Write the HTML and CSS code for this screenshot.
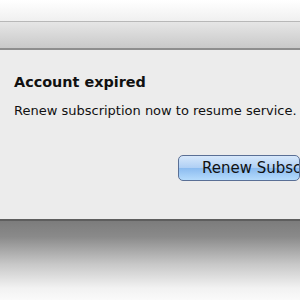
FILE: index.html
```html
<!DOCTYPE html>
<html>
<head>
<meta charset="utf-8">
<link rel="stylesheet" href="styles.css">
</head>
<body>
<div class="screen">
  <div class="topbar"></div>
  <div class="toolbar"></div>
  <div class="dialog">
    <h1 class="title">Account expired</h1>
    <p class="message">Renew subscription now to resume service.</p>
    <div class="actions">
      <button class="btn">Renew Subscription</button>
    </div>
  </div>
  <div class="shadow"></div>
</div>
</body>
</html>
```
FILE: styles.css
```css
html, body {
  margin: 0;
  padding: 0;
  width: 300px;
  height: 300px;
  overflow: hidden;
}
.screen {
  width: 300px;
  height: 300px;
  display: flex;
  flex-direction: column;
  font-family: "DejaVu Sans", "Liberation Sans", sans-serif;
  color: #111;
}
.topbar {
  height: 21px;
  background: linear-gradient(#ffffff, #f0f0f0);
  border-bottom: 1px solid #b8b8b8;
  flex: none;
}
.toolbar {
  height: 26px;
  background: linear-gradient(#e6e6e6, #c9c9c9);
  border-bottom: 2px solid #8e8e8e;
  flex: none;
}
.dialog {
  height: 169px;
  background: #ececec;
  padding: 23px 0 0 14px;
  box-sizing: border-box;
  flex: none;
  display: flex;
  flex-direction: column;
  overflow: hidden;
}
.title {
  margin: 0;
  font-size: 14.4px;
  font-weight: bold;
  line-height: 18px;
  white-space: nowrap;
}
.message {
  margin: 12px 0 0;
  font-size: 13px;
  line-height: 15px;
  white-space: nowrap;
}
.actions {
  margin-top: 37px;
  padding-left: 164px;
  display: flex;
}
.btn {
  flex: none;
  height: 26px;
  width: 122px;
  padding: 0 0 0 23px;
  text-align: left;
  font-family: "DejaVu Sans", "Liberation Sans", sans-serif;
  font-size: 15px;
  color: #111;
  border: 1px solid #5a6f95;
  border-radius: 5px;
  background: linear-gradient(#d7e8fb 0%, #b0d0f5 48%, #8cbcf0 52%, #b5dbfc 100%);
  white-space: nowrap;
  overflow: hidden;
}
.shadow {
  flex: 1;
  border-top: 2px solid #5e5e5e;
  background: linear-gradient(#7c7c7c 0%, #8a8a8a 20%, #c8c8c8 55%, #f2f2f2 85%, #fafafa 100%);
}
```
